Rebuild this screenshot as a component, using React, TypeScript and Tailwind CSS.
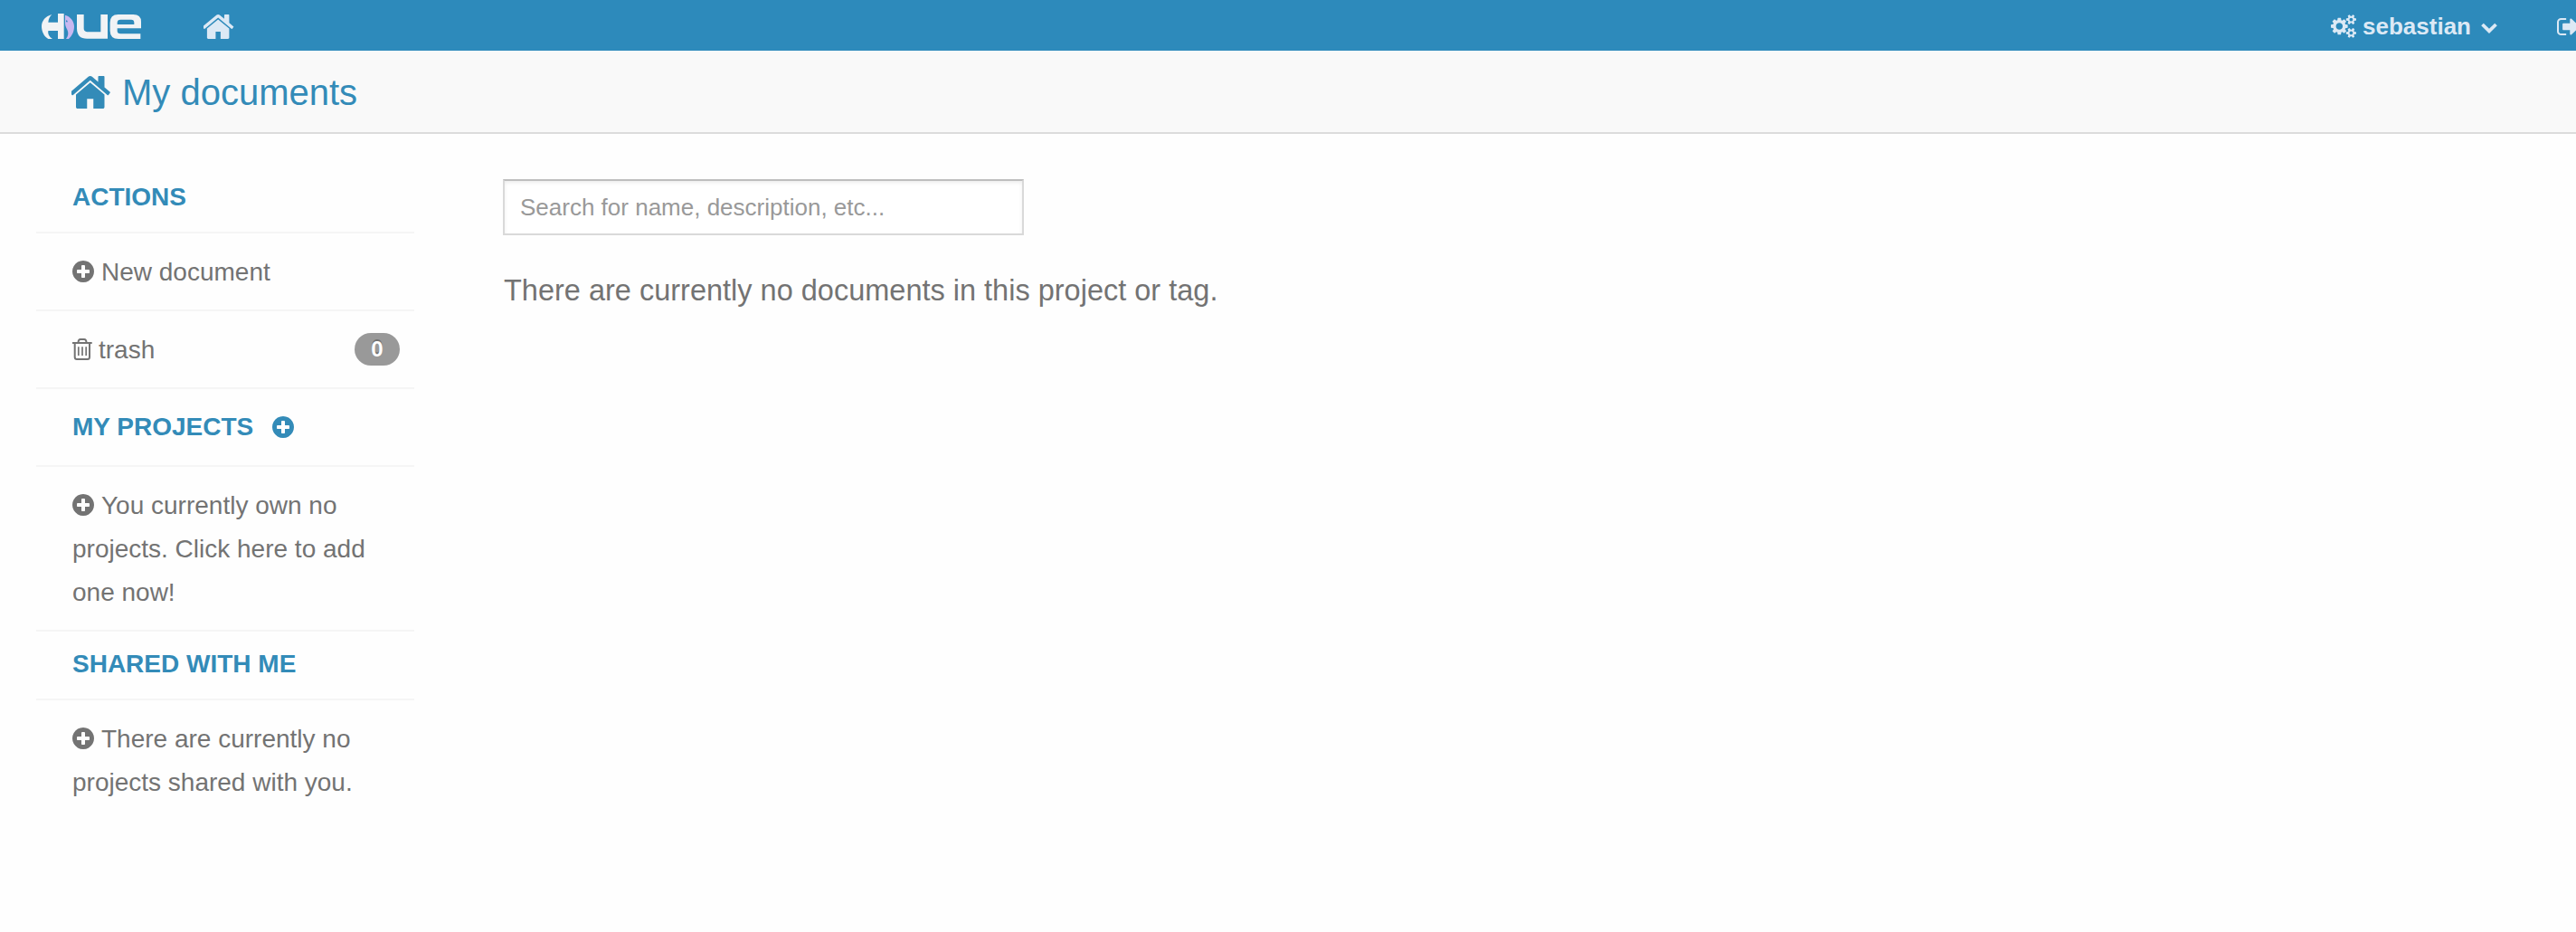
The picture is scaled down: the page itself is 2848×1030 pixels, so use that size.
import React from "react";

const PATHS = {
  home: "M1408 992v480q0 26-19 45t-45 19h-384v-384h-256v384h-384q-26 0-45-19t-19-45v-480q0-1 .5-3t.5-3l575-474 575 474q1 2 1 6zm223-69l-62 74q-8 9-21 11h-3q-13 0-21-7l-692-577-692 577q-12 8-24 7-13-2-21-11l-62-74q-8-10-7-23.5t11-21.5l719-599q32-26 76-26t76 26l244 204v-195q0-14 9-23t23-9h192q14 0 23 9t9 23v408l219 182q10 8 11 21.5t-7 23.5z",
  plus: "M1344 960v-128q0-26-19-45t-45-19h-256v-256q0-26-19-45t-45-19h-128q-26 0-45 19t-19 45v256h-256q-26 0-45 19t-19 45v128q0 26 19 45t45 19h256v256q0 26 19 45t45 19h128q26 0 45-19t19-45v-256h256q26 0 45-19t19-45zm320-64q0 209-103 385.5t-279.5 279.5-385.5 103-385.5-103-279.5-279.5-103-385.5 103-385.5 279.5-279.5 385.5-103 385.5 103 279.5 279.5 103 385.5z",
  cogs: "M896 896q0-106-75-181t-181-75-181 75-75 181 75 181 181 75 181-75 75-181zm768 512q0-52-38-90t-90-38-90 38-38 90q0 53 37.5 90.5t90.5 37.5 90.5-37.5 37.5-90.5zm0-1024q0-52-38-90t-90-38-90 38-38 90q0 53 37.5 90.5t90.5 37.5 90.5-37.5 37.5-90.5zm-384 421v185q0 10-7 19.5t-16 10.5l-155 24q-11 35-32 76 34 48 90 115 7 11 7 20 0 12-7 19-23 30-82.5 89.5t-78.5 59.5q-11 0-21-7l-115-90q-37 19-77 31-11 108-23 155-7 24-30 24h-186q-11 0-20-7.5t-10-17.5l-23-153q-34-10-75-31l-118 89q-7 7-20 7-11 0-21-8-144-133-144-160 0-9 7-19 10-14 41-53t47-61q-23-44-35-82l-152-24q-10-1-17-9.5t-7-19.5v-185q0-10 7-19.5t16-10.5l155-24q11-35 32-76-34-48-90-115-7-11-7-20 0-12 7-20 22-30 82-89t79-59q11 0 21 7l115 90q34-18 77-32 11-108 23-154 7-24 30-24h186q11 0 20 7.5t10 17.5l23 153q34 10 75 31l118-89q8-7 20-7 11 0 21 8 144 133 144 160 0 8-7 19-12 16-42 54t-45 60q23 48 34 82l152 23q10 2 17 10.5t7 19.5zm640 533v140q0 16-149 31-12 27-30 52 51 113 51 138 0 4-4 7-122 71-124 71-8 0-46-47t-52-68q-20 2-30 2t-30-2q-14 21-52 68t-46 47q-2 0-124-71-4-3-4-7 0-25 51-138-18-25-30-52-149-15-149-31v-140q0-16 149-31 13-29 30-52-51-113-51-138 0-4 4-7 4-2 35-20t59-34 30-16q8 0 46 46.5t52 67.5q20-2 30-2t30 2q51-71 92-112l6-2q4 0 124 70 4 3 4 7 0 25-51 138 17 23 30 52 149 15 149 31zm0-1024v140q0 16-149 31-12 27-30 52 51 113 51 138 0 4-4 7-122 71-124 71-8 0-46-47t-52-68q-20 2-30 2t-30-2q-14 21-52 68t-46 47q-2 0-124-71-4-3-4-7 0-25 51-138-18-25-30-52-149-15-149-31v-140q0-16 149-31 13-29 30-52-51-113-51-138 0-4 4-7 4-2 35-20t59-34 30-16q8 0 46 46.5t52 67.5q20-2 30-2t30 2q51-71 92-112l6-2q4 0 124 70 4 3 4 7 0 25-51 138 17 23 30 52 149 15 149 31z",
  signOut: "M704 1440q0 4 1 20t.5 26.5-3 23.5-10 19.5-20.5 6.5h-320q-119 0-203.5-84.5t-84.5-203.5v-704q0-119 84.5-203.5t203.5-84.5h320q13 0 22.5 9.5t9.5 22.5q0 4 1 20t.5 26.5-3 23.5-10 19.5-20.5 6.5h-320q-66 0-113 47t-47 113v704q0 66 47 113t113 47h312l11.5 1 11.5 3 8 5.5 7 9 2 13.5zm928-544q0 26-19 45l-544 544q-19 19-45 19t-45-19-19-45v-288h-448q-26 0-45-19t-19-45v-384q0-26 19-45t45-19h448v-288q0-26 19-45t45-19 45 19l544 544q19 19 19 45z",
};

function Icon({ path, viewBox, className }: { path: string; viewBox: string; className: string }) {
  return (
    <svg viewBox={viewBox} className={className} fill="currentColor" preserveAspectRatio="none">
      <path d={path} />
    </svg>
  );
}

const Home = ({ className }: { className: string }) => (
  <Icon path={PATHS.home} viewBox="73 253 1646 1283" className={className} />
);

const Plus = ({ className = "" }: { className?: string }) => (
  <Icon path={PATHS.plus} viewBox="128 128 1536 1536" className={"inline-block size-6 shrink-0 " + className} />
);

const Trash = () => (
  <svg viewBox="0 0 22 24" className="mr-[7px] h-6 w-[22px]" fill="none" stroke="currentColor" strokeWidth="2">
    <path d="M0 5h21.700M2.700 5v15.500Q2.700 23 5 23h11.700q2.300 0 2.300-2.500V5M6.500 5q0-4 2.500-4h4q2.500 0 2.500 4" />
    <path d="M6.800 9.300v9.700M11 9.300v9.700M15.200 9.300v9.700" strokeWidth="1.700" />
  </svg>
);

const Logo = () => (
  <svg viewBox="0 0 330 84" className="ml-[46px] h-7 w-[110px]">
    <path fill="#f1f3f5" d="M34 3C12 9 0 25 0 42s8 34 22 42h14c-12-8-16-17-14-27h32v27h20V0H54v29H22C23 18 27 9 34 3z" />
    <path fill="#c9b8f0" d="M78 5c18 5 30 20 30 38 0 17-7 31-18 41h-9c8-10 9-20 4-31-4-8-7-13-7-21z" />
    <path fill="#2d8abb" d="M81 22l5 2-1 5-4-2z" />
    <path fill="none" stroke="#f1f3f5" strokeWidth="23" d="M128.500 3v46q0 23 22 23h57V3" />
    <path
      fill="#f1f3f5"
      fillRule="evenodd"
      d="M254 3h50q26 0 26 24v22h-79v8q0 10 11 10h66v17h-73q-28 0-28-27V30q0-27 27-27zM262 20q-11 0-11 10v6h56v-6q0-10-10-10z"
    />
  </svg>
);

function Heading({ children, className }: { children: React.ReactNode; className: string }) {
  return (
    <div className={"flex items-center border-b-2 border-[#f5f5f5] pl-10 font-bold text-[#338bb8] " + className}>
      {children}
    </div>
  );
}

export default function App() {
  return (
    <div className="h-[1030px] w-full overflow-hidden bg-[#fefefe] font-['Liberation_Sans',Arial,sans-serif] text-[28px] leading-[48px] text-[#737373]">
      <nav className="flex h-14 items-center bg-[#2d8abb] pt-0.5 text-[#dce9f5]">
        <Logo />
        <Home className="ml-[69px] h-[27px] w-[35px]" />
        <div className="ml-auto flex shrink-0 items-center">
          <Icon path={PATHS.cogs} viewBox="0 0 1920 1792" className="h-[26px] w-7" />
          <span className="ml-[7px] text-[26px] font-bold">sebastian</span>
          <svg viewBox="0 0 18 12" className="ml-[11px] mt-[3px] h-3 w-[18px]" fill="none" stroke="currentColor" strokeWidth="3.800">
            <path d="M1.500 2L9 9.300 16.500 2" />
          </svg>
        </div>
        <div className="ml-[66px] w-[21px] shrink-0 overflow-hidden">
          <Icon path={PATHS.signOut} viewBox="64 256 1568 1280" className="h-[19px] w-[25px] max-w-none" />
        </div>
      </nav>
      <header className="flex h-[92px] items-center border-b-2 border-[#dcdcdc] bg-[#f9f9f9] pl-[79px] pt-0.5 text-[#338bb8]">
        <Home className="h-9 w-[45px]" />
        <h1 className="ml-[11px] text-[40px]">My documents</h1>
      </header>
      <div className="flex">
        <aside className="ml-10 mt-[34px] w-[418px] shrink-0">
          <Heading className="h-[76px] pb-0.5">ACTIONS</Heading>
          <div className="flex h-[86px] items-center border-b-2 border-[#f5f5f5] pl-10">
            <Plus className="mr-2" />
            <span className="pt-0.5">New document</span>
          </div>
          <div className="flex h-[86px] items-center border-b-2 border-[#f5f5f5] pl-10 pr-4">
            <Trash />
            <span className="pt-0.5">trash</span>
            <span className="ml-auto flex h-9 w-[50px] items-center justify-center rounded-full bg-[#999] text-[24px] font-bold text-white [text-shadow:0_-2px_0_rgba(0,0,0,0.25)]">
              0
            </span>
          </div>
          <Heading className="h-[86px]">
            MY PROJECTS
            <Plus className="ml-[21px]" />
          </Heading>
          <div className="border-b-2 border-[#f5f5f5] pb-[17px] pl-10 pr-4 pt-[19px]">
            <Plus className="-mt-1.5 mr-2" />
            You currently own no projects. Click here to add one now!
          </div>
          <Heading className="h-[76px] pb-0.5">SHARED WITH ME</Heading>
          <div className="pb-[17px] pl-10 pr-4 pt-[19px]">
            <Plus className="-mt-1.5 mr-2" />
            There are currently no projects shared with you.
          </div>
        </aside>
        <main className="ml-[98px] mt-[50px]">
          <input
            placeholder="Search for name, description, etc..."
            className="block h-[62px] w-[576px] border-2 border-[#d9d9d9] border-t-[#bebebe] bg-white px-[17px] text-[26px] shadow-[inset_0_2px_4px_rgba(0,0,0,0.075)] outline-none placeholder:text-[#999]"
          />
          <p className="mt-[37px] pl-px text-[32.5px]">There are currently no documents in this project or tag.</p>
        </main>
      </div>
    </div>
  );
}
